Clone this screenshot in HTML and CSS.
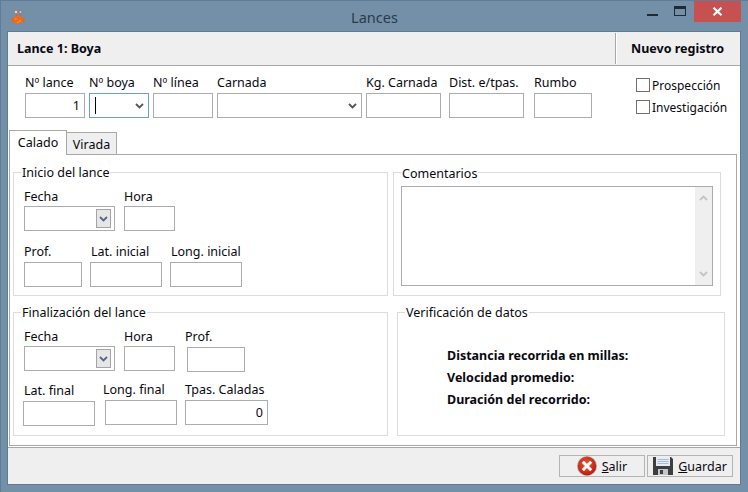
FILE: index.html
```html
<!DOCTYPE html>
<html lang="es">
<head>
  <meta charset="utf-8">
  <title>Lances</title>
  <link rel="stylesheet" href="styles.css">
</head>
<body>
<div class="window">

  <!-- title bar -->
  <div class="titlebar">
    <svg class="appicon" width="16" height="17" viewBox="0 0 16 17">
      <circle cx="6" cy="3" r="1.6" fill="#e8e0d8" stroke="#a87a60" stroke-width=".8"/>
      <circle cx="10.5" cy="3" r="1.6" fill="#c8c8c8" stroke="#8a6a60" stroke-width=".8"/>
      <path d="M6 5l1 3M10.5 5l-1 3" stroke="#d9601c" stroke-width="1"/>
      <path d="M1 10h14M1.500 13l2-1M14.500 13l-2-1" stroke="#e8641a" stroke-width="1.400"/>
      <ellipse cx="8" cy="11" rx="5" ry="4.200" fill="#ee6a1c"/>
      <path d="M5 10h1.500M9 12h2M7 13.500h1.500" stroke="#f9a35c" stroke-width="1"/>
    </svg>
    <div class="title">Lances</div>
    <div class="controls">
      <span class="min"></span>
      <span class="max"></span>
      <span class="close">
        <svg width="11" height="9" viewBox="0 0 11 9"><path d="M1.500 .8l8 7.400M9.500 .8l-8 7.400" stroke="#fff" stroke-width="2.200"/></svg>
      </span>
    </div>
  </div>

  <div class="client">
    <div class="head">
      <div class="head-title">Lance 1: Boya</div>
      <div class="head-action">Nuevo registro</div>
    </div>

    <!-- top fields -->
    <div class="toprow">
      <div class="field w60"><label>Nº lance</label><input class="num" value="1"></div>
      <div class="field w60"><label>Nº boya</label>
        <div class="combo focused"><i class="caret"></i>
          <svg class="chev" width="9" height="6" viewBox="0 0 9 6"><path d="M1 1l3.500 3.500L8 1" fill="none" stroke="#555" stroke-width="1.800"/></svg>
        </div>
      </div>
      <div class="field w60"><label>Nº línea</label><input></div>
      <div class="field w145"><label>Carnada</label>
        <div class="combo">
          <svg class="chev" width="9" height="6" viewBox="0 0 9 6"><path d="M1 1l3.500 3.500L8 1" fill="none" stroke="#555" stroke-width="1.800"/></svg>
        </div>
      </div>
      <div class="field w75"><label>Kg. Carnada</label><input></div>
      <div class="field w75 ml4"><label>Dist. e/tpas.</label><input></div>
      <div class="field w58 ml6"><label>Rumbo</label><input></div>
      <div class="checks">
        <label class="check"><input type="checkbox">Prospección</label>
        <label class="check"><input type="checkbox">Investigación</label>
      </div>
    </div>

    <div class="tabs">
      <div class="tab active">Calado</div>
      <div class="tab">Virada</div>
    </div>

    <div class="panel">
      <div class="grouprow first">
        <fieldset class="group left">
          <legend>Inicio del lance</legend>
          <div class="line pt7">
            <div class="field w91"><label>Fecha</label>
              <div class="combo">
                <span class="dropbtn"><svg width="9" height="6" viewBox="0 0 9 6"><path d="M1 1l3.500 3.500L8 1" fill="none" stroke="#5a6488" stroke-width="1.800"/></svg></span>
              </div>
            </div>
            <div class="field w51 ml9"><label>Hora</label><input></div>
          </div>
          <div class="line lift">
            <div class="field w58"><label>Prof.</label><input></div>
            <div class="field w72 ml8 inset"><label>Lat. inicial</label><input></div>
            <div class="field w72 ml8 inset"><label>Long. inicial</label><input></div>
          </div>
        </fieldset>
        <fieldset class="group comments">
          <legend>Comentarios</legend>
          <div class="memo">
            <div class="scroll">
              <svg width="9" height="6" viewBox="0 0 9 6"><path d="M1 5l3.500-3.500L8 5" fill="none" stroke="#c4c4c4" stroke-width="1.800"/></svg>
              <svg width="9" height="6" viewBox="0 0 9 6"><path d="M1 1l3.500 3.500L8 1" fill="none" stroke="#c4c4c4" stroke-width="1.800"/></svg>
            </div>
          </div>
        </fieldset>
      </div>

      <div class="grouprow second">
        <fieldset class="group left">
          <legend>Finalización del lance</legend>
          <div class="line pt7">
            <div class="field w91"><label>Fecha</label>
              <div class="combo">
                <span class="dropbtn"><svg width="9" height="6" viewBox="0 0 9 6"><path d="M1 1l3.500 3.500L8 1" fill="none" stroke="#5a6488" stroke-width="1.800"/></svg></span>
              </div>
            </div>
            <div class="field w51 ml9"><label>Hora</label><input></div>
            <div class="field ml10 prof"><label>Prof.</label><input></div>
          </div>
          <div class="line endline">
            <div class="field w72 latfinal inset"><label>Lat. final</label><input></div>
            <div class="field w72 ml10 longfinal"><label>Long. final</label><input></div>
            <div class="field w83 ml8"><label>Tpas. Caladas</label><input class="num" value="0"></div>
          </div>
        </fieldset>
        <fieldset class="group verify">
          <legend>Verificación de datos</legend>
          <p>Distancia recorrida en millas:</p>
          <p>Velocidad promedio:</p>
          <p>Duración del recorrido:</p>
        </fieldset>
      </div>
    </div>

    <div class="footer">
      <button>
        <svg class="btnicon" width="20" height="20" viewBox="0 0 20 20">
          <defs><radialGradient id="red" cx=".45" cy=".4" r=".65"><stop offset="0" stop-color="#e8603c"/><stop offset="1" stop-color="#b81408"/></radialGradient></defs>
          <circle cx="10" cy="10" r="10" fill="#b8a8a0"/>
          <circle cx="10" cy="10" r="9.200" fill="url(#red)"/>
          <path d="M5.800 5.800l8.400 8.400M14.200 5.800l-8.400 8.400" stroke="#fff" stroke-width="3"/>
        </svg>
        <span><u>S</u>alir</span>
      </button>
      <button>
        <svg class="btnicon" width="20" height="20" viewBox="0 0 20 20">
          <path d="M0 1h18l2 2v16H0z" fill="#3c3f42"/>
          <rect x="3" y="1" width="14" height="9" fill="#e6ecf6"/>
          <path d="M4.500 3.500h11M4.500 5.500h11M4.500 7.500h11" stroke="#a8bcd8" stroke-width="1"/>
          <rect x="5" y="13" width="10" height="6" fill="#c4c6c8"/>
          <rect x="7" y="14" width="3" height="4" fill="#3c3f42"/>
        </svg>
        <span><u>G</u>uardar</span>
      </button>
    </div>
  </div>
</div>
</body>
</html>
```

FILE: styles.css
```css
* {box-sizing:border-box}
body   {margin:0;font:12.5px "Noto Sans",sans-serif;color:#08080f}
.window{width:748px;height:492px;background:#7490a8;border:1px solid #5f7d96;border-width:1px 0 0 1px;overflow:hidden}

/* title bar */
.titlebar {display:grid;grid-template-columns:1fr auto 1fr;height:31px}
.appicon  {margin:8px 0 0 9px}
.title    {font-size:14.500px;line-height:32px;color:#2c3a46}
.controls {display:flex;justify-content:flex-end;align-items:flex-start;padding-right:7px}
.min      {width:11px;height:2px;margin:13px 16px 0 0;background:#1f2a34}
.max      {width:12px;height:10px;margin:5px 8px 0 0;border:1px solid #1f2a34;border-top-width:3px}
.close    {width:47px;height:21px;background:#c75050;display:flex;align-items:center;justify-content:center}

.client {width:732px;height:452px;margin-left:7px;background:#fff;outline:1px solid #5f7b94;display:flex;flex-direction:column}

.head {display:flex;height:34px;background:#efefef;border-bottom:1px solid #a8a8a8;font-weight:700;line-height:33px}
.head-title  {flex:1;padding-left:9px}
.head-action {width:125px;margin:1px 0;line-height:31px;padding-left:15px;border-left:1px solid #a8a8a8;box-shadow:inset 1px 0 #fff}

/* fields */
.field {display:flex;flex-direction:column;align-items:flex-start}
.field label {height:17px;line-height:17px;margin-bottom:1px;white-space:nowrap}
.field input {width:100%}
input  {height:25px;border:1px solid #ababb0;padding:0 4px;font:inherit;color:inherit;background:#fff;outline:0}
.num   {text-align:right}
.inset label {padding-left:1px}
.w51   {width:51px}
.w58   {width:58px}
.w60   {width:60px}
.w72   {width:72px}
.w75   {width:75px}
.w83   {width:83px}
.w91   {width:91px}
.w145  {width:145px}
.ml4   {margin-left:4px}
.ml6   {margin-left:6px}
.ml8   {margin-left:8px}
.ml9   {margin-left:9px}
.ml10  {margin-left:10px}

.combo {width:100%;height:25px;border:1px solid #ababb0;display:flex;align-items:center;justify-content:flex-end;padding-right:4px}
.combo.focused {border-color:#6a9fd8;justify-content:space-between}
.caret {width:1px;height:17px;margin-left:5px;background:#000}
.chev  {margin-top:1px}
.dropbtn {width:15px;height:19px;margin-right:-1px;background:#e6e6e6;border:1px solid #a4a4a8;display:flex;align-items:center;justify-content:center}

.toprow {display:flex;gap:4px;height:64px;padding:8px 0 0 17px}
.toprow .field label {margin-bottom:2px}
.checks {margin:4px 0 0 40px;display:flex;flex-direction:column;gap:8px}
.check  {display:flex;align-items:center;height:14px;gap:2px;white-space:nowrap;font-size:12px}
.check input {appearance:none;width:14px;height:14px;margin:0;padding:0;border:1px solid #707070}

/* tabs */
.tabs {display:flex;align-items:flex-end;height:24px;padding-left:1px}
.tab  {width:50px;height:23px;margin-bottom:-1px;border:1px solid #a8a8a8;border-left:0;background:#efefef;text-align:center;line-height:23px}
.tab.active {width:58px;height:25px;border-left:1px solid #a8a8a8;border-bottom:0;background:#fff;line-height:24px;z-index:1}

.panel {width:728px;height:292px;margin-left:1px;border:1px solid #a8a8a8;padding:9px 0 0 3px}

/* group boxes */
.grouprow {display:flex;height:132px}
.grouprow.first {gap:5px}
.grouprow.second {gap:9px;margin-top:8px}
.group {margin:0;border:1px solid #dcdcdc;min-width:0;height:132px}
.group legend {height:17px;line-height:17px;padding:0 1px}
.left {width:375px;padding:0 0 0 10px}
.left legend {margin-left:-3px}
.line {display:flex;align-items:flex-start}
.pt7  {padding-top:7px}
.lift {padding-top:12px}
.lift .field label {margin-bottom:2px}
.endline {margin:9px 0 0 -1px}
.endline .field label {margin-bottom:2px}
.prof input {width:58px;margin:1px 0 0 2px}
.latfinal {margin-top:1px}
.endline .longfinal label {margin:0 0 2px -2px}

.comments {width:328px;padding:0 0 0 7px}
.comments legend {padding-top:1px}
.memo   {width:312px;height:100px;margin-top:5px;border:1px solid #ababb0;display:flex;justify-content:flex-end}
.scroll {width:17px;background:#efefef;display:flex;flex-direction:column;justify-content:space-between;align-items:center;padding:8px 0}

.verify {width:328px;padding:24px 0 0 49px;font-weight:700}
.verify legend {margin-left:-42px;font-weight:400}
.verify p {margin:0;line-height:22px}

/* buttons */
.footer {display:flex;justify-content:flex-end;gap:2px;height:37px;margin-top:1px;padding:7px 7px 0 0;background:#efefef;border-top:1px solid #a8a8a8}
button {width:86px;height:22px;padding:0;display:flex;align-items:center;justify-content:center;gap:5px;border:1px solid #b4b4b4;background:#efefef;font:inherit;color:inherit}
.btnicon {flex:none}
```
